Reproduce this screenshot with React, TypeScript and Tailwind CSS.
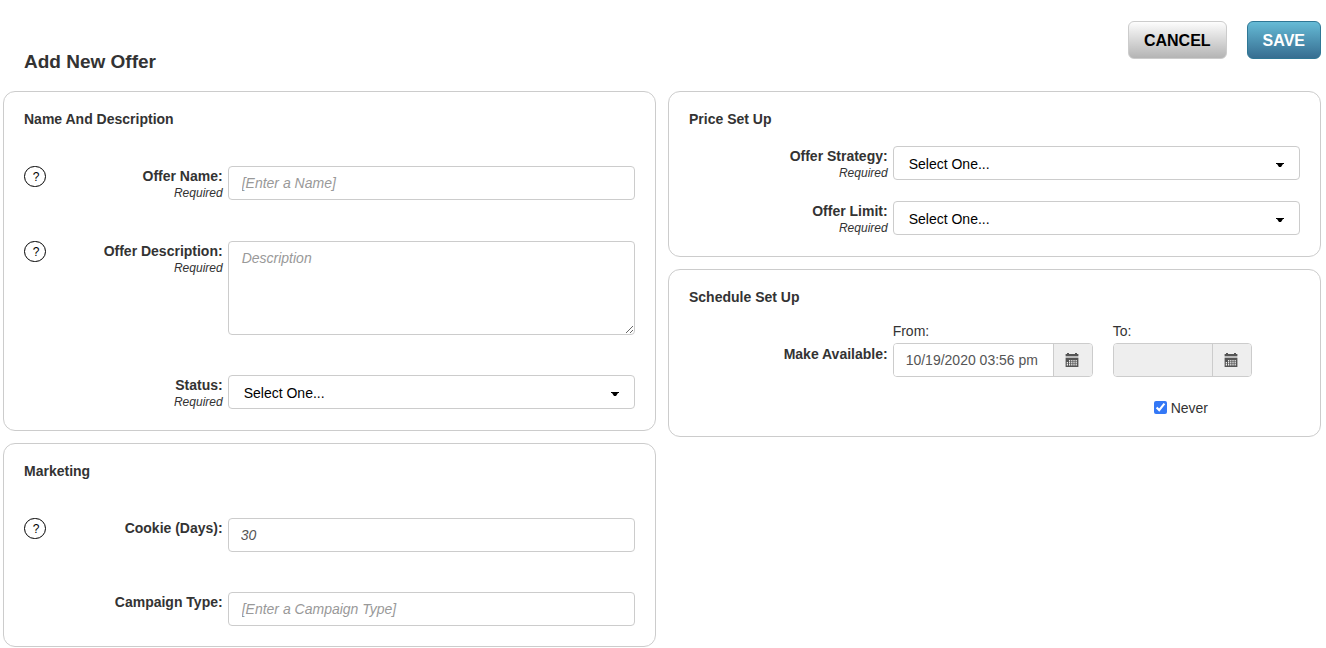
import { useId, useState } from 'react'
import type { ReactNode } from 'react'

const fieldBase =
  'block w-full rounded border border-[#ccc] bg-white px-3 text-sm italic text-[#555] placeholder:text-[#999] placeholder-shown:px-[13px]'

function Card({ title, children }: { title: string; children: ReactNode }) {
  return (
    <section className="rounded-xl border border-[#ccc] px-5 pt-[17px] pb-5">
      <h2 className="mb-[17px] text-sm leading-5 font-bold">{title}</h2>
      {children}
    </section>
  )
}

function HelpButton({ topic }: { topic: string }) {
  return (
    <button
      type="button"
      aria-label={`Help: ${topic}`}
      className="flex h-[21px] w-[22px] shrink-0 items-center justify-center rounded-full border border-black pl-0.5 text-xs text-black"
    >
      ?
    </button>
  )
}

type RowProps = {
  id: string
  label: string
  required?: boolean
  help?: boolean
  children: ReactNode
}

function Row({ id, label, required, help, children }: RowProps) {
  return (
    <div className="flex items-start">
      <div className="flex w-1/3 shrink-0 items-start justify-between pr-[5px]">
        {help ? <HelpButton topic={label} /> : <span />}
        <label htmlFor={id} className="text-right">
          <span className="block text-sm leading-5 font-bold">{label}:</span>
          {required && <span className="block text-xs leading-[15px] italic">Required</span>}
        </label>
      </div>
      <div className="min-w-0 flex-1">{children}</div>
    </div>
  )
}

function SelectRow({ label }: { label: string }) {
  const id = useId()
  return (
    <Row id={id} label={label} required>
      <div className="relative">
        <select
          id={id}
          className="block h-[34px] w-full appearance-none rounded border border-[#ccc] bg-white px-[15px] pt-0.5 text-sm text-black"
        >
          <option>Select One...</option>
        </select>
        <svg
          className="pointer-events-none absolute top-[17px] right-4"
          width="8"
          height="4"
          viewBox="0 0 8 4"
          aria-hidden="true"
        >
          <path d="M0 0h8v1H7L5 4H3L1 1H0z" fill="#000" />
        </svg>
      </div>
    </Row>
  )
}

type TextRowProps = { label: string; required?: boolean; help?: boolean; placeholder?: string; value?: string }

function TextRow({ label, required, help, placeholder, value }: TextRowProps) {
  const id = useId()
  return (
    <Row id={id} label={label} required={required} help={help}>
      <input id={id} type="text" placeholder={placeholder} defaultValue={value} className={`${fieldBase} h-[34px]`} />
    </Row>
  )
}

function DescriptionRow() {
  const id = useId()
  return (
    <Row id={id} label="Offer Description" required help>
      <textarea id={id} placeholder="Description" className={`${fieldBase} h-[94px] resize py-1.5 leading-5`} />
    </Row>
  )
}

function CalendarIcon() {
  return (
    <svg width="14" height="14" viewBox="0 0 14 14" fill="#555" aria-hidden="true">
      <path d="M2 0h2v1h6V0h2v1h1.4v2H.6V1H2z" />
      <path d="M.6 3h12.8v2H.6z" fill="#bbb" />
      <path
        fillRule="evenodd"
        d="M.6 5h12.8v9H.6zM4 7v1.4h1.2V7zM6.2 7v1.4h1.2V7zM8.4 7v1.4h1.2V7zM10.6 7v1.4h1.2V7zM1.8 9v1.4H3V9zM4 9v1.4h1.2V9zM6.2 9v1.4h1.2V9zM8.4 9v1.4h1.2V9zM10.6 9v1.4h1.2V9zM1.8 11v1.4H3V11zM4 11v1.4h1.2V11zM6.2 11v1.4h1.2V11zM8.4 11v1.4h1.2V11zM10.6 11v1.4h1.2V11z"
      />
    </svg>
  )
}

type DateFieldProps = { id: string; label: string; value: string; disabled?: boolean; width: string }

function DateField({ id, label, value, disabled, width }: DateFieldProps) {
  return (
    <div className={width}>
      <label htmlFor={id} className="mb-[5px] block text-sm leading-[14px]">
        {label}
      </label>
      <div className="flex h-[34px] overflow-hidden rounded border border-[#ccc]">
        <input
          id={id}
          type="text"
          defaultValue={value}
          disabled={disabled}
          className="min-w-0 flex-1 bg-white pl-3 text-sm text-[#555] disabled:bg-[#eee]"
        />
        <button
          type="button"
          aria-label={`Choose date, ${label}`}
          className="flex w-[39px] shrink-0 items-center border-l border-[#ccc] bg-[#eee] pl-[11px]"
        >
          <CalendarIcon />
        </button>
      </div>
    </div>
  )
}

export default function App() {
  const [never, setNever] = useState(true)
  return (
    <main className="bg-white pr-[5px] pb-px pl-[3px] font-['Liberation_Sans',Arial,sans-serif] text-[#333]">
      <header className="flex items-start justify-between pt-[21px] pb-4 pl-[21px]">
        <h1 className="pt-7 text-[19px] leading-[26px] font-bold">Add New Offer</h1>
        <div className="flex gap-5">
          <button
            type="button"
            className="h-[38px] rounded-md border border-[#ccc] bg-linear-to-b from-[#fdfdfd] to-[#b4b4b4] px-[15px] pt-0.5 text-base font-bold text-black"
          >
            CANCEL
          </button>
          <button
            type="button"
            className="h-[38px] rounded-md border border-[#2f7795] bg-linear-to-b from-[#66bbd6] to-[#376e91] px-[15px] pt-0.5 text-base font-bold text-white"
          >
            SAVE
          </button>
        </div>
      </header>

      <form className="grid grid-cols-2 items-start gap-3">
        <div className="flex flex-col gap-3">
          <Card title="Name And Description">
            <div className="flex flex-col gap-10 pt-5">
              <TextRow label="Offer Name" required help placeholder="[Enter a Name]" />
              <DescriptionRow />
              <SelectRow label="Status" />
            </div>
          </Card>
          <Card title="Marketing">
            <div className="flex flex-col gap-10 pt-5">
              <TextRow label="Cookie (Days)" help value="30" />
              <TextRow label="Campaign Type" placeholder="[Enter a Campaign Type]" />
            </div>
          </Card>
        </div>

        <div className="flex flex-col gap-3">
          <Card title="Price Set Up">
            <div className="flex flex-col gap-5">
              <SelectRow label="Offer Strategy" />
              <SelectRow label="Offer Limit" />
            </div>
          </Card>
          <Card title="Schedule Set Up">
            <div className="flex items-start">
              <div className="w-1/3 shrink-0 pt-5 pr-[5px] text-right text-sm leading-5 font-bold">Make Available:</div>
              <div className="flex gap-5">
                <DateField id="from" label="From:" value="10/19/2020 03:56 pm" width="w-[200px]" />
                <div>
                  <DateField id="to" label="To:" value="" disabled={never} width="w-[139px]" />
                  <label className="mt-[23px] flex items-start gap-1 pl-[41px] text-sm leading-4">
                    <input
                      type="checkbox"
                      checked={never}
                      onChange={(e) => setNever(e.target.checked)}
                      className="mt-px size-[13px] accent-[#3478f6]"
                    />
                    Never
                  </label>
                </div>
              </div>
            </div>
          </Card>
        </div>
      </form>
    </main>
  )
}
